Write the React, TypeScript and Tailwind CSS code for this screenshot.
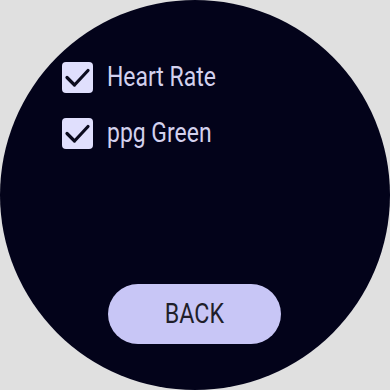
import React from "react";

function CheckBox() {
  return (
    <div className="w-[31px] h-[31px] rounded-[4px] bg-[#e0dffd] shrink-0">
      <svg width="31" height="31" viewBox="0 0 31 31" fill="none">
        <path d="M5 15.5l7.5 7.5L26 8.5" stroke="#0b0b1e" strokeWidth="3.2" strokeLinecap="round" strokeLinejoin="round" />
      </svg>
    </div>
  );
}

export default function App() {
  return (
    <div className="w-[390px] h-[390px] bg-[#e0e0e0]" style={{ fontFamily: "Roboto, 'Liberation Sans', sans-serif" }}>
      <div className="w-full h-full rounded-full bg-[#03031a] flex flex-col pl-[62px] pt-[62px]">
        <div className="flex flex-col gap-[25px]">
          <div className="flex items-center gap-[14px] h-[31px]">
            <CheckBox />
            <span className="text-[27px] text-[#d3d1ee] leading-none scale-x-[0.85] origin-left whitespace-nowrap">Heart Rate</span>
          </div>
          <div className="flex items-center gap-[14px] h-[31px]">
            <CheckBox />
            <span className="text-[27px] text-[#d3d1ee] leading-none scale-x-[0.85] origin-left whitespace-nowrap">ppg Green</span>
          </div>
        </div>
        <div className="mt-[135px] ml-[46px] w-[173px] h-[60px] rounded-full bg-[#c8c6f6] flex items-center justify-center">
          <span className="text-[27px] text-[#1f1f2a] leading-none scale-x-[0.86]">BACK</span>
        </div>
      </div>
    </div>
  );
}
